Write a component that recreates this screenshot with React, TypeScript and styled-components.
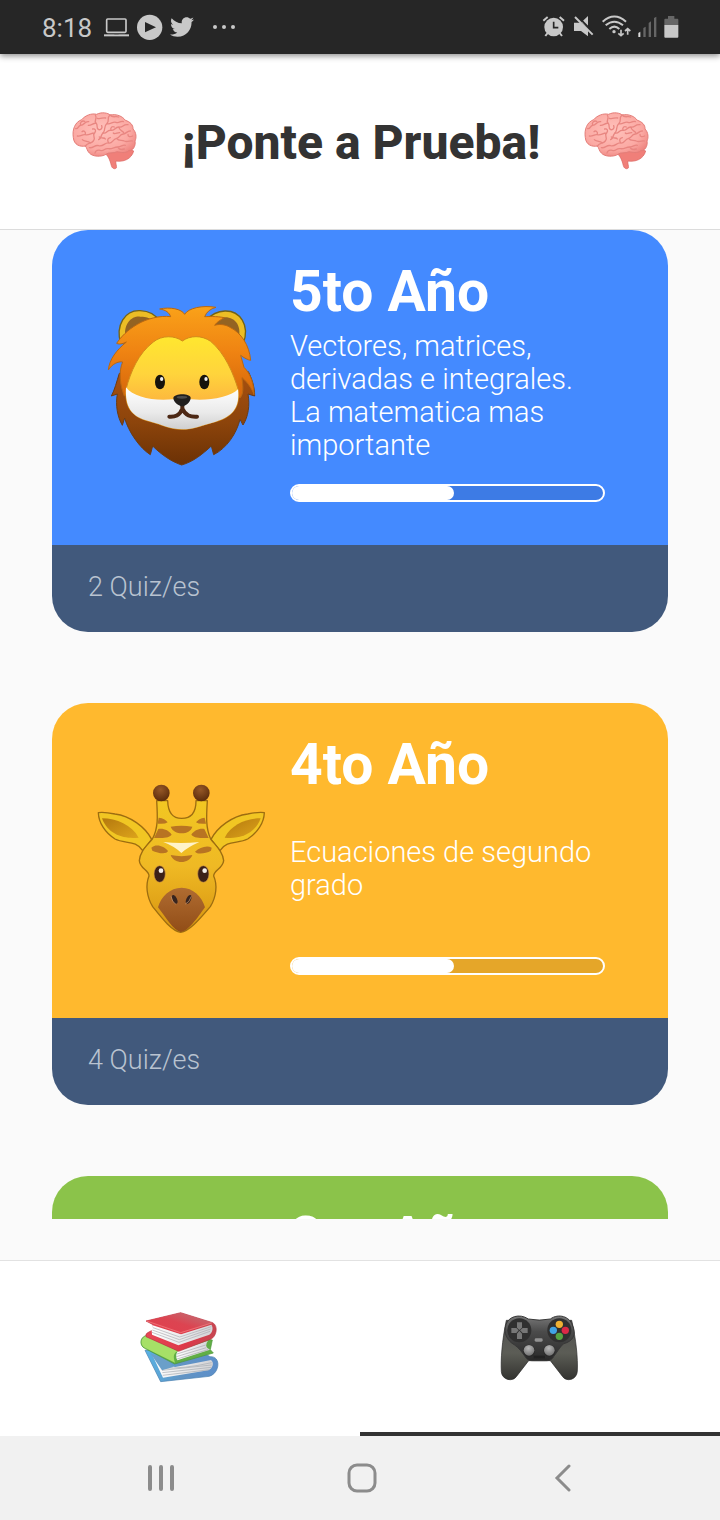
import React from 'react';
import styled, { createGlobalStyle } from 'styled-components';
import { FaTwitter } from 'react-icons/fa';

const GlobalStyle = createGlobalStyle`
  * { box-sizing: border-box; }
  body { margin: 0; background: #fafafa; font-family: Roboto, "Noto Sans", sans-serif; }
  h1, h2, p { margin: 0; }
  button { border: 0; padding: 0; background: none; font: inherit; cursor: pointer; }
  svg { display: block; flex: none; }
`;

const Screen = styled.div`
  display: flex;
  flex-direction: column;
  height: 100vh;
  background: #fafafa;
`;

const StatusBar = styled.div`
  flex: none;
  display: flex;
  align-items: center;
  justify-content: space-between;
  height: 54px;
  padding: 0 41px 0 42px;
  background: #262626;
  color: #c8c8c8;
  box-shadow: 0 2px 6px rgba(0, 0, 0, 0.45);
  z-index: 1;
`;

const StatusGroup = styled.div`
  display: flex;
  align-items: center;
  gap: 7px;
`;

const Clock = styled.span`
  width: 55px;
  padding-top: 2px;
  font-size: 26px;
  line-height: 34px;
`;

const MoreNotifications = styled.span`
  padding-left: 11px;
`;

const Header = styled.header`
  flex: none;
  display: flex;
  align-items: center;
  justify-content: space-between;
  height: 176px;
  padding: 0 58px 0 60px;
  background: #fff;
  border-bottom: 1px solid #dcdcdc;
`;

const PageTitle = styled.h1`
  padding-top: 2px;
  font-size: 48px;
  line-height: 56px;
  font-weight: 800;
  color: #333;
`;

const CardList = styled.main`
  flex: 1;
  min-height: 0;
  display: flex;
  flex-direction: column;
  gap: 71px;
  margin-bottom: 41px;
  padding: 0 52px;
  overflow-y: auto;
  scrollbar-width: none;
`;

const Card = styled.article`
  flex: none;
  border-radius: 36px;
  overflow: hidden;
`;

const CardBody = styled.div<{ $color: string }>`
  display: grid;
  grid-template-columns: 180px 1fr;
  column-gap: 20px;
  align-items: center;
  padding: 28px 63px 43px 38px;
  background: ${(p) => p.$color};
  color: #fff;
`;

const CardTitle = styled.h2`
  font-size: 57px;
  line-height: 68px;
  font-weight: 700;
`;

const Description = styled.p`
  display: flex;
  align-items: center;
  min-height: 139px;
  font-size: 29px;
  line-height: 33px;
  font-weight: 300;
`;

const Progress = styled.progress`
  appearance: none;
  display: block;
  width: 100%;
  height: 18px;
  margin-top: 19px;
  border: 2px solid #fff;
  border-radius: 9px;
  overflow: hidden;
  background: rgba(0, 0, 0, 0.1);
  &::-webkit-progress-bar { background: transparent; }
  &::-webkit-progress-value { background: #fff; border-radius: 0 7px 7px 0; }
`;

const CardFooter = styled.div`
  padding: 25px 36px 28px;
  background: #41597c;
  color: #b9c3d0;
  font-size: 27px;
  line-height: 34px;
  font-weight: 300;
`;

const TabBar = styled.nav`
  flex: none;
  display: flex;
  height: 176px;
  background: #fff;
  border-top: 1px solid #e2e2e2;
`;

const Tab = styled.button<{ $active?: boolean }>`
  flex: 1;
  display: flex;
  align-items: center;
  justify-content: center;
  border-bottom: 4px solid ${(p) => (p.$active ? '#333' : 'transparent')};
`;

const SystemNav = styled.nav`
  flex: none;
  display: flex;
  height: 84px;
  padding: 0 57px 0 60px;
  background: #f1f1f1;
`;

const SystemButton = styled.button`
  flex: 1;
  display: flex;
  align-items: center;
  justify-content: center;
`;

/* ---------- Illustrations ---------- */

const Brain = () => (
  <svg width="90" height="80" viewBox="0 5 270 240" aria-hidden="true">
    <defs>
      <radialGradient id="brainFill" cx=".45" cy=".4" r=".65">
        <stop offset="0" stopColor="#ffc2bc" />
        <stop offset=".7" stopColor="#fba9a3" />
        <stop offset="1" stopColor="#ee8580" />
      </radialGradient>
    </defs>
    <path d="M130 155 C145 165 150 180 154 196 C156 204 164 208 169 203 C171 196 166 190 168 182 C190 186 215 176 221 152 L200 140Z" fill="#f07f79" stroke="#d9645f" strokeWidth="2" />
    <path d="M40 112 C36 88 45 65 65 58 C76 45 95 38 110 42 C125 34 145 38 150 44 C170 40 188 48 196 60 C210 64 220 74 219 86 C229 96 230 112 225 122 C228 138 218 152 206 151 C198 160 180 156 172 154 C160 160 145 155 138 162 C125 170 98 170 88 158 C80 150 82 144 76 137 C60 140 42 134 40 112Z" fill="url(#brainFill)" stroke="#e47d78" strokeWidth="3" />
    <g fill="none" stroke="#e88681" strokeWidth="4" strokeLinecap="round" strokeLinejoin="round">
      <path d="M47 85 C56 86 54 76 62 75 C74 75 72 62 86 64 M62 75 C58 65 67 60 74 63" />
      <path d="M76 137 C85 125 92 132 100 122 C110 110 94 106 104 98 C110 90 105 84 98 86 M104 98 C90 98 88 106 76 103 C66 101 62 110 52 107 M76 103 C78 92 70 90 66 94 M92 128 C82 120 72 124 67 118" />
      <path d="M106 44 C114 56 100 60 108 68 C116 76 106 82 116 88 C124 90 128 82 125 76 M108 68 C96 70 94 76 85 75 M112 54 C122 58 128 50 137 53" />
      <path d="M150 44 C138 54 151 62 140 70 C130 78 138 90 129 98 C121 105 126 113 116 118 M150 44 C158 54 168 46 176 50 M140 70 C152 74 158 62 168 66 C178 70 182 60 190 64" />
      <path d="M129 98 C142 101 140 88 153 90 C166 93 164 79 177 80 C190 82 188 71 204 73 M153 90 C150 80 158 77 163 80 M177 80 C177 92 188 90 191 97" />
      <path d="M88 142 C100 145 104 132 116 136 C130 140 134 126 146 128 C158 130 157 117 170 114 C182 110 177 103 190 101 C200 100 201 91 211 92 M146 128 C140 119 144 113 151 112 M170 114 C176 124 186 117 193 122 C203 127 211 119 217 122" />
      <path d="M105 158 C106 150 116 148 121 150 C132 154 132 143 145 145 C158 147 163 139 174 140 C184 140 188 132 196 135 M174 140 C177 149 187 148 193 146 M204 102 C203 110 211 110 218 107 M160 98 C165 104 172 96 179 97 M118 110 C126 116 133 110 136 116" />
    </g>
  </svg>
);

const Lion = () => (
  <svg width="180" height="190" viewBox="0 -15 540 570" aria-hidden="true">
    <defs>
      <linearGradient id="lionMane" x1="0" y1="0" x2="0" y2="1">
        <stop offset="0" stopColor="#faa219" />
        <stop offset=".5" stopColor="#ef8312" />
        <stop offset="1" stopColor="#d5660b" />
      </linearGradient>
      <linearGradient id="lionBeard" x1="0" y1="0" x2="0" y2="1">
        <stop offset="0" stopColor="#a85010" />
        <stop offset=".55" stopColor="#8c440b" />
        <stop offset="1" stopColor="#6b3105" />
      </linearGradient>
      <linearGradient id="lionFace" x1="0" y1="0" x2="0" y2="1">
        <stop offset="0" stopColor="#ffe72f" />
        <stop offset=".4" stopColor="#ffd43c" />
        <stop offset=".68" stopColor="#fdb93e" />
      </linearGradient>
      <linearGradient id="lionMuzzle" x1="0" y1="0" x2="0" y2="1">
        <stop offset="0" stopColor="#fff" />
        <stop offset=".6" stopColor="#eaeaea" />
        <stop offset="1" stopColor="#cfcfcf" />
      </linearGradient>
    </defs>
    <g stroke="#746316" strokeWidth="4">
      <path d="M92 160 C76 105 105 60 150 62 C180 63 200 78 210 95 L150 150Z" fill="#ecbd25" />
      <path d="M460 160 C480 105 450 62 405 63 C380 64 365 72 350 90 L410 150Z" fill="#ecbd25" />
    </g>
    <path d="M106 145 C100 100 125 78 150 80 C170 80 188 85 195 98 L140 150Z" fill="#936322" />
    <path d="M445 150 C456 110 438 82 405 82 C390 82 380 90 372 100 L410 150Z" fill="#936322" />
    <path d="M88 250 C80 275 74 300 64 318 L82 312 C76 345 82 380 97 406 L104 384 C115 425 150 475 181 494 L188 468 C215 495 245 515 275 525 C310 515 338 492 364 468 L371 494 C410 475 440 430 450 388 L459 405 C475 380 480 345 474 312 L494 318 C494 290 485 265 475 245Z" fill="url(#lionBeard)" stroke="#6b3b14" strokeWidth="3" />
    <path d="M284 73 C275 57 240 50 209 57 C228 60 238 68 242 80 C210 76 170 86 142 103 C112 120 92 142 80 160 C90 165 101 160 109 156 C80 180 58 208 55 240 C66 223 84 213 98 216 C85 245 90 285 103 318 C120 300 438 300 450 324 C462 310 459 290 456 263 C474 278 488 300 492 314 C492 285 483 252 462 232 L452 196 C462 204 475 210 482 211 C478 165 453 128 420 112 C405 102 385 102 374 106 C380 96 394 88 403 83 C378 78 355 80 344 80 C350 65 362 56 378 52 C338 45 295 54 284 73Z" fill="url(#lionMane)" stroke="#b96711" strokeWidth="3" strokeLinejoin="round" />
    <path d="M277 153 C300 136 335 135 362 154 C405 190 430 250 445 300 C450 350 430 380 377 395 C335 406 310 418 277 418 C240 418 220 405 178 394 C122 380 105 350 108 298 C122 245 145 190 190 156 C215 135 255 136 277 153Z" fill="url(#lionFace)" stroke="#d38b1a" strokeWidth="3" />
    <path d="M108 292 C130 322 190 334 250 328 H304 C355 333 420 322 444 298 C450 350 430 380 377 395 C335 406 310 418 277 418 C240 418 220 405 178 394 C122 380 105 350 108 292Z" fill="url(#lionMuzzle)" />
    <ellipse cx="210" cy="276" rx="15" ry="22" fill="#17130c" />
    <ellipse cx="343" cy="276" rx="15" ry="22" fill="#17130c" />
    <ellipse cx="215" cy="267" rx="5" ry="6" fill="#eee" />
    <ellipse cx="348" cy="267" rx="5" ry="6" fill="#eee" />
    <path d="M277 345 V356 C268 378 255 381 238 380 M277 356 C287 378 302 381 321 380" fill="none" stroke="#4c2815" strokeWidth="12" strokeLinecap="round" />
    <path d="M250 324 C252 310 301 309 302 324 C302 336 286 349 277 349 C267 349 250 336 250 324Z" fill="#211f1e" />
    <ellipse cx="276" cy="322" rx="16" ry="4" fill="#4c4c4c" />
  </svg>
);

const Giraffe = () => (
  <svg width="180" height="180" viewBox="0 -21 540 540" aria-hidden="true">
    <defs>
      <linearGradient id="giraffeFace" x1="0" y1="0" x2="0" y2="1">
        <stop offset="0" stopColor="#f2c722" />
        <stop offset=".5" stopColor="#efb924" />
        <stop offset="1" stopColor="#d6930f" />
      </linearGradient>
      <linearGradient id="giraffeEar" x1="0" y1="0" x2="1" y2="1">
        <stop offset="0" stopColor="#b4780e" />
        <stop offset="1" stopColor="#dda41b" />
      </linearGradient>
      <linearGradient id="giraffeNose" x1="0" y1="0" x2="0" y2="1">
        <stop offset="0" stopColor="#b06c31" />
        <stop offset="1" stopColor="#914d17" />
      </linearGradient>
      <radialGradient id="giraffeHorn" cx=".45" cy=".3" r=".7">
        <stop offset="0" stopColor="#965827" />
        <stop offset="1" stopColor="#5c2c0b" />
      </radialGradient>
    </defs>
    <g fill="#f1c623" stroke="#9d6d10" strokeWidth="4" strokeLinejoin="round">
      <path d="M185 208 C165 170 120 138 75 132 C55 128 38 126 25 128 C26 158 45 188 75 207 C105 222 138 210 158 242Z" />
      <path d="M363 208 C383 170 428 138 473 132 C493 128 510 126 523 128 C522 158 503 188 473 207 C443 222 410 210 390 242Z" />
    </g>
    <path d="M36 145 C80 145 125 165 146 203 C105 208 54 196 36 145Z" fill="url(#giraffeEar)" />
    <path d="M512 145 C468 145 423 165 404 203 C443 208 494 196 512 145Z" fill="url(#giraffeEar)" />
    <path d="M200 92 C203 140 205 175 187 207 C170 228 150 244 148 272 C150 297 177 300 177 318 C166 345 170 380 188 410 C212 440 245 484 272 487 C300 484 335 440 361 410 C379 380 383 345 371 318 C371 300 398 297 401 272 C398 244 378 228 362 207 C347 175 349 140 352 92 L318 92 C318 128 302 145 275 145 C247 145 234 128 233 92Z" fill="url(#giraffeFace)" stroke="#9d6d10" strokeWidth="4" strokeLinejoin="round" />
    <g fill="#b87422">
      <path d="M206 143 Q225 145 233 157 Q225 163 203 161Z M344 143 Q326 145 318 157 Q326 163 348 161Z" />
      <path d="M205 177 C220 174 237 181 245 194 C235 206 210 204 192 204Z M343 177 C329 174 312 181 304 194 C314 206 339 204 356 204Z" />
      <path d="M242 170 Q274 164 307 170 C300 196 252 197 242 170Z M242 255 Q274 262 307 255 C297 283 252 283 242 255Z" />
      <path d="M184 233 C200 220 222 229 234 243 C230 254 204 250 187 242Z M365 233 C350 225 329 233 315 245 C322 254 347 251 363 242Z" />
    </g>
    <path d="M220 216 Q274 222 328 216 Q292 232 274 249 Q254 229 220 216Z" fill="#fff3ca" />
    <path d="M204 412 C213 380 240 353 275 353 C309 353 336 380 345 412 C322 444 294 485 272 486 C250 482 226 440 204 412Z" fill="url(#giraffeNose)" />
    <ellipse cx="254" cy="388" rx="7" ry="14" transform="rotate(-23 254 388)" fill="#37241e" />
    <ellipse cx="296" cy="388" rx="7" ry="14" transform="rotate(23 296 388)" fill="#37241e" />
    <path d="M243 379 Q247 398 257 402 M286 402 Q298 398 304 379" fill="none" stroke="#d2a078" strokeWidth="2" />
    <ellipse cx="209" cy="312" rx="17" ry="25" fill="#3c2118" stroke="#d69a45" strokeWidth="2" />
    <ellipse cx="340" cy="312" rx="17" ry="25" fill="#3c2118" stroke="#d69a45" strokeWidth="2" />
    <circle cx="213" cy="302" r="7" fill="#f4f0ea" />
    <circle cx="344" cy="302" r="7" fill="#f4f0ea" />
    <circle cx="214" cy="69" r="25" fill="url(#giraffeHorn)" />
    <circle cx="334" cy="69" r="25" fill="url(#giraffeHorn)" />
  </svg>
);

const Books = () => (
  <svg width="120" height="110" viewBox="0 5 360 330" aria-hidden="true">
    <defs>
      <linearGradient id="bookBlue" x1="0" y1="0" x2="1" y2="0">
        <stop offset="0" stopColor="#57b2e4" />
        <stop offset=".5" stopColor="#6294c4" />
        <stop offset="1" stopColor="#5c8fca" />
      </linearGradient>
      <linearGradient id="bookRed" x1="0" y1="0" x2="1" y2="0">
        <stop offset="0" stopColor="#e64755" />
        <stop offset=".55" stopColor="#dd3848" />
        <stop offset="1" stopColor="#c74651" />
      </linearGradient>
      <linearGradient id="bookTop" x1="0" y1="1" x2="1" y2="0">
        <stop offset="0" stopColor="#e33e4d" />
        <stop offset=".5" stopColor="#dc4451" />
        <stop offset="1" stopColor="#b9787c" />
      </linearGradient>
      <linearGradient id="bookPages" x1="0" y1="0" x2="1" y2="0">
        <stop offset="0" stopColor="#fff" />
        <stop offset="1" stopColor="#d3d3d6" />
      </linearGradient>
    </defs>
    <path d="M75 180 L122 274 L268 258 C300 248 304 197 270 199 L240 180Z" fill="url(#bookBlue)" stroke="#487eaf" strokeWidth="2" />
    <path d="M98 196 L129 262 L265 240 C278 235 284 217 273 209 L166 230 Q126 230 98 196Z" fill="url(#bookPages)" />
    <path d="M126 233 Q190 236 275 217 M126 240 L275 224 M127 247 L274 231 M128 255 L269 238" fill="none" stroke="#a5aab1" strokeWidth="2" />
    <path d="M92 190 L126 240 L160 230 L142 206Z" fill="#6a9fc9" />
    <path d="M76 136 C58 144 59 166 74 174 L164 221 L280 188 L271 178 L277 149 L180 130Z" fill="#61ae45" stroke="#4b963b" strokeWidth="2" />
    <path d="M77 137 C60 145 61 166 76 173 L165 217 C159 198 160 188 174 182Z" fill="#a6e067" />
    <path d="M174 182 L264 151 Q250 168 270 178 L172 210 Q164 194 174 182Z" fill="url(#bookPages)" />
    <path d="M171 191 L257 164 M169 199 L259 172 M171 206 L264 178" stroke="#a5a8ab" strokeWidth="2" />
    <path d="M78 92 L182 67 L278 97 C296 107 289 139 273 146 L176 183 L78 139 Q74 130 88 124 L99 119 V103Z" fill="url(#bookRed)" stroke="#b93441" strokeWidth="2" strokeLinejoin="round" />
    <path d="M98 105 L183 132 L274 103 C280 110 279 126 268 133 L175 165 L96 133 Q93 119 98 105Z" fill="url(#bookPages)" />
    <path d="M99 112 L179 140 L274 109 M97 119 L178 148 L272 116 M96 126 L177 156 L270 123" fill="none" stroke="#aaaab0" strokeWidth="2" />
    <path d="M78 92 L182 67 L278 97 L182 130Z" fill="url(#bookTop)" />
    <path d="M80 92 L182 127 L275 98" fill="none" stroke="#f68688" strokeWidth="2" />
  </svg>
);

const Gamepad = () => (
  <svg width="120" height="110" viewBox="0 5 360 330" aria-hidden="true">
    <defs>
      <linearGradient id="padBody" x1="0" y1="0" x2="0" y2="1">
        <stop offset="0" stopColor="#777" />
        <stop offset=".35" stopColor="#4b4b4b" />
        <stop offset="1" stopColor="#292929" />
      </linearGradient>
      <linearGradient id="padGrip" x1="0" y1="0" x2="0" y2="1">
        <stop offset="0" stopColor="#515151" />
        <stop offset=".55" stopColor="#5c5d56" />
        <stop offset="1" stopColor="#333330" />
      </linearGradient>
      <radialGradient id="padStick" cx=".45" cy=".3" r=".8">
        <stop offset="0" stopColor="#b9b9b9" />
        <stop offset="1" stopColor="#696969" />
      </radialGradient>
    </defs>
    <path d="M79 90 C66 150 62 210 64 244 C66 270 99 275 109 259 L146 211 H211 L248 259 C258 275 291 270 292 242 C294 205 288 145 275 90Z" fill="url(#padGrip)" stroke="#272727" strokeWidth="2" />
    <path d="M78 103 C85 79 118 68 145 86 Q178 93 211 86 C236 68 269 79 277 104 C290 132 280 153 251 160 C237 172 231 187 222 197 C216 210 207 211 196 211 H160 C148 211 141 210 134 197 C126 186 117 173 104 164 C79 150 70 126 78 103Z" fill="url(#padBody)" stroke="#383838" strokeWidth="3" />
    <circle cx="118" cy="120" r="36" fill="#303030" />
    <circle cx="238" cy="120" r="36" fill="#303030" />
    <path d="M111 96 H126 V112 L118 119 L111 112Z M111 146 H126 V130 L118 121 L111 130Z M94 113 H109 L116 120 L109 128 H94Z M143 113 H128 L120 120 L128 128 H143Z" fill="#777" />
    <circle cx="238" cy="102" r="11" fill="#efb134" />
    <circle cx="220" cy="120" r="11" fill="#41a4e5" />
    <circle cx="256" cy="120" r="11" fill="#dc2947" />
    <circle cx="238" cy="138" r="11" fill="#57a441" />
    <rect x="164" y="144" width="24" height="10" rx="4" fill="#929292" />
    <circle cx="147" cy="181" r="18" fill="#292929" />
    <circle cx="208" cy="181" r="18" fill="#292929" />
    <circle cx="147" cy="180" r="16" fill="url(#padStick)" />
    <circle cx="208" cy="180" r="16" fill="url(#padStick)" />
    <path d="M161 200 H195" stroke="#222" strokeWidth="8" />
  </svg>
);

/* ---------- Status icons ---------- */

const Laptop = () => (
  <svg width="26" height="34" viewBox="312 30 78 102" aria-hidden="true">
    <rect x="320" y="57" width="58" height="40" rx="3" fill="none" stroke="#c8c8c8" strokeWidth="5" />
    <path d="M312 103 H387 V109 H312Z" fill="#c8c8c8" />
    <path d="M343 103 h13" stroke="#666" strokeWidth="2" />
  </svg>
);

const Play = () => (
  <svg width="26" height="34" viewBox="411 30 78 102" aria-hidden="true">
    <circle cx="449" cy="82" r="38" fill="#c8c8c8" />
    <path d="M435 66 L468 82 L435 97Z" fill="#262626" />
  </svg>
);

const Dots = () => (
  <svg width="24" height="34" viewBox="636 30 72 102" fill="#c8c8c8" aria-hidden="true">
    <circle cx="645" cy="81" r="6" />
    <circle cx="672" cy="81" r="6" />
    <circle cx="699" cy="81" r="6" />
  </svg>
);

const Alarm = () => (
  <svg width="24" height="34" viewBox="66 30 72 102" aria-hidden="true">
    <circle cx="101" cy="81" r="28" fill="#c8c8c8" />
    <path d="M70 62 L83 51 M132 62 L119 51 M83 99 L76 108 M119 99 L126 108" stroke="#c8c8c8" strokeWidth="6" />
    <path d="M101 65 V83 H115" fill="none" stroke="#262626" strokeWidth="5" />
  </svg>
);

const Muted = () => (
  <svg width="22" height="34" viewBox="162 30 66 102" aria-hidden="true">
    <path d="M188 66 L207 48 V82Z" fill="#c8c8c8" />
    <path d="M165 68 H184 L207 88 V109 L186 93 H165Z" fill="#c8c8c8" />
    <path d="M173 46 L226 99" stroke="#262626" strokeWidth="5" />
    <path d="M168 51 L221 104" stroke="#c8c8c8" strokeWidth="6" />
  </svg>
);

const Wifi = () => (
  <svg width="29" height="34" viewBox="248 30 87 102" aria-hidden="true">
    <g fill="none" stroke="#c8c8c8" strokeWidth="6">
      <path d="M250 65 Q285 34 320 65" />
      <path d="M259 76 Q285 54 311 76" />
      <path d="M270 87 Q285 73 300 87" />
      <path d="M305 89 V106 M297 100 L305 107 L313 100 M325 104 V87 M317 93 L325 86 L333 93" strokeWidth="5" />
    </g>
    <circle cx="284" cy="95" r="5" fill="#c8c8c8" />
  </svg>
);

const Signal = () => (
  <svg width="19" height="34" viewBox="350 30 57 102" fill="#666" aria-hidden="true">
    <path d="M351 99 L357 95 V111 H351Z" fill="#dedede" />
    <path d="M366 84 L373 80 V111 H366Z M382 69 L389 64 V111 H382Z M398 54 L405 50 V111 H398Z" />
  </svg>
);

const Battery = () => (
  <svg width="15" height="34" viewBox="431 30 45 102" aria-hidden="true">
    <path d="M432 75 V59 Q432 56 435 56 H443 V48 H462 V56 H471 Q474 56 474 59 V75Z" fill="#666" />
    <path d="M432 75 H474 V110 Q474 113 471 113 H435 Q432 113 432 110Z" fill="#c8c8c8" />
  </svg>
);

/* ---------- Content ---------- */

const levels = [
  {
    title: '5to Año',
    description: 'Vectores, matrices, derivadas e integrales. La matematica mas importante',
    color: '#448aff',
    quizzes: 2,
    progress: 0.52,
    Icon: Lion,
  },
  {
    title: '4to Año',
    description: 'Ecuaciones de segundo grado',
    color: '#ffb92e',
    quizzes: 4,
    progress: 0.52,
    Icon: Giraffe,
  },
  {
    title: '3er Año',
    description: '',
    color: '#8bc34a',
    quizzes: 0,
    progress: 0.52,
    Icon: null,
  },
];

export default function App() {
  return (
    <>
      <GlobalStyle />
      <Screen>
        <StatusBar>
          <StatusGroup>
            <Clock>8:18</Clock>
            <Laptop />
            <Play />
            <FaTwitter size={24} />
            <MoreNotifications>
              <Dots />
            </MoreNotifications>
          </StatusGroup>
          <StatusGroup>
            <Alarm />
            <Muted />
            <Wifi />
            <Signal />
            <Battery />
          </StatusGroup>
        </StatusBar>
        <Header>
          <Brain />
          <PageTitle>¡Ponte a Prueba!</PageTitle>
          <Brain />
        </Header>
        <CardList>
          {levels.map(({ title, description, color, quizzes, progress, Icon }) => (
            <Card key={title}>
              <CardBody $color={color}>
                {Icon ? <Icon /> : <span />}
                <div>
                  <CardTitle>{title}</CardTitle>
                  <Description>{description}</Description>
                  <Progress value={progress} max={1} aria-label={`Progreso de ${title}`} />
                </div>
              </CardBody>
              <CardFooter>{quizzes} Quiz/es</CardFooter>
            </Card>
          ))}
        </CardList>
        <TabBar>
          <Tab type="button" aria-label="Libros">
            <Books />
          </Tab>
          <Tab type="button" aria-label="Juegos" $active>
            <Gamepad />
          </Tab>
        </TabBar>
        <SystemNav>
          <SystemButton type="button" aria-label="Recientes">
            <svg width="26" height="28" viewBox="0 0 26 28" stroke="#8c8c8c" strokeWidth="4" strokeLinecap="round">
              <path d="M2 3 V25 M13 3 V25 M24 3 V25" />
            </svg>
          </SystemButton>
          <SystemButton type="button" aria-label="Inicio">
            <svg width="30" height="30" viewBox="0 0 30 30" fill="none" stroke="#8c8c8c" strokeWidth="3">
              <rect x="2" y="2" width="26" height="26" rx="8" />
            </svg>
          </SystemButton>
          <SystemButton type="button" aria-label="Atrás">
            <svg width="18" height="28" viewBox="0 0 18 28" fill="none" stroke="#8c8c8c" strokeWidth="3" strokeLinecap="round">
              <path d="M15 2 L3 14 L15 26" />
            </svg>
          </SystemButton>
        </SystemNav>
      </Screen>
    </>
  );
}
